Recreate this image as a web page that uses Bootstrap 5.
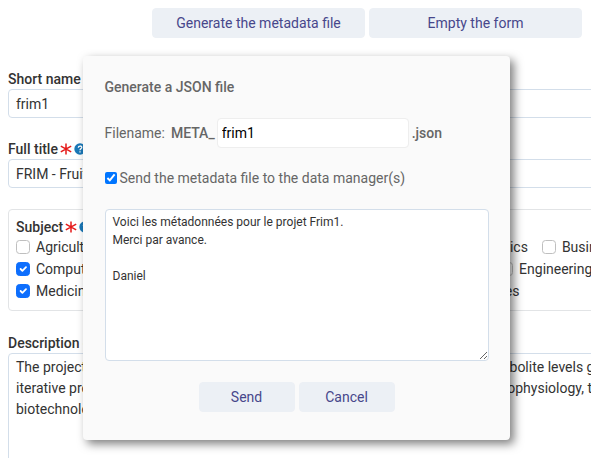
<!DOCTYPE html>
<html lang="en">
<head>
<meta charset="utf-8">
<meta name="viewport" content="width=device-width, initial-scale=1">
<title>Metadata form</title>
<link href="https://cdn.jsdelivr.net/npm/bootstrap@5.3.0/dist/css/bootstrap.min.css" rel="stylesheet">
<style>
  body { font-family: Roboto, "Liberation Sans", sans-serif; font-size: 14px; line-height: 20px; color: #333; background: #fff; height: 100vh; }
  .sheet { width: 150vw; min-width: 860px; padding: 8px; }
  .actions { padding-left: 144px; gap: 4px; margin-bottom: 31px; }
  .btn-soft { --bs-btn-bg: #ecf0f5; --bs-btn-color: #47478b; --bs-btn-hover-bg: #dfe5ee; --bs-btn-hover-color: #47478b; font-size: 14px; line-height: 20px; padding: 4px 12px; border-radius: 4px; border: 1px solid #ecf0f5; height: 30px; }
  .btn-wide { width: 213px; }
  .btn-short { width: 96px; }
  .field-title { font-weight: 500; line-height: 20px; gap: 2px; }
  .field-block { margin-bottom: 21px; }
  .form-control { font-size: 14px; line-height: 20px; color: #333; border: 1px solid #d3deea; border-radius: 4px; padding: 4px 7px; }
  .field-block .form-control { height: 29px; }
  .subjects { border: 1px solid #e2e4e6; border-radius: 4px; padding: 7px; margin-bottom: 22px; }
  .choice-row { gap: 7px; height: 22px; }
  .choice-row .form-check { min-height: 20px; padding-left: 20px; margin: 0; white-space: nowrap; }
  .choice-row .form-check.set-apart { margin-left: 7px; }
  .choice-row .form-check-input { width: 14px; height: 14px; margin: 3px 0 0 -20px; border-color: #bfbfbf; }
  .choice-row .form-check-input:checked { border-color: #0d6efd; }
  .long-text { line-height: 21px; height: 140px; padding-top: 3px; resize: none; overflow: hidden; }
  .overlay { left: 0; right: 0; top: 56px; padding-left: 1px; }
  .dialog-box { width: 427px; background: #fafafa; border-radius: 4px; color: #666; padding: 21px 21px 20px 22px; box-shadow: 4px 4px 10px rgba(0,0,0,.5); }
  .dialog-box h2 { font-size: 14px; line-height: 20px; font-weight: 500; margin: 0 0 21px; }
  .name-row { margin-bottom: 20px; }
  .name-row b { font-weight: 500; }
  .name-row label { margin-right: 6px; }
  .name-row .form-control { width: 192px; color: #000; border-color: #eee; padding: 4px; margin: 0 3px 0 2px; }
  .native-check { width: 12px; height: 12px; margin: 0 3px 0 0; accent-color: #0075ff; }
  .message { font-size: 12px; line-height: 18px; height: 152px; margin: 21px 0; padding: 3px 7px; resize: both; }
</style>
<script src="https://cdn.jsdelivr.net/npm/bootstrap@5.3.0/dist/js/bootstrap.bundle.min.js"></script>
</head>
<body class="position-relative overflow-hidden">
<svg class="d-none">
  <symbol id="star" viewBox="0 0 12 12"><path d="M6 .5v11M.8 3.200l10.400 5.600M11.200 3.200L.8 8.800" stroke="#e51a1a" stroke-width="1.500" fill="none"/></symbol>
  <symbol id="help" viewBox="0 0 12 12"><circle cx="6" cy="6" r="5.700" fill="#1a78b8"/><path d="M4.300 4.700c0-2.200 3.500-2.200 3.500-.2C7.800 5.700 6 5.600 6 7.200M6 8.200v1.300" stroke="#fff" stroke-width="1.300" fill="none"/></symbol>
</svg>
<main class="sheet">
  <div class="actions d-flex">
    <button type="button" class="btn btn-soft btn-wide">Generate the metadata file</button>
    <button type="button" class="btn btn-soft btn-wide">Empty the form</button>
  </div>
  <form>
    <div class="field-block">
      <label class="field-title d-flex align-items-center" for="short">Short name <svg width="12" height="12"><use href="#star"/></svg></label>
      <input class="form-control" id="short" value="frim1">
    </div>
    <div class="field-block">
      <label class="field-title d-flex align-items-center" for="full">Full title <svg width="12" height="12"><use href="#star"/></svg><svg width="12" height="12"><use href="#help"/></svg></label>
      <input class="form-control" id="full" value="FRIM - Fruit Integrative Modelling">
    </div>
    <div class="subjects" role="group" aria-labelledby="subject">
      <div class="field-title d-flex align-items-center" id="subject">Subject <svg width="12" height="12"><use href="#star"/></svg><svg width="12" height="12"><use href="#help"/></svg></div>
      <div class="choice-row d-flex">
        <div class="form-check"><input class="form-check-input" type="checkbox" id="s1"><label for="s1">Agricultural Sciences</label></div>
        <div class="form-check"><input class="form-check-input" type="checkbox" id="s2"><label for="s2">Arts and Humanities</label></div>
        <div class="form-check"><input class="form-check-input" type="checkbox" id="s3"><label for="s3">Astronomy and Astrophysics</label></div>
        <div class="form-check set-apart"><input class="form-check-input" type="checkbox" id="s4"><label for="s4">Business and Management</label></div>
      </div>
      <div class="choice-row d-flex">
        <div class="form-check"><input class="form-check-input" type="checkbox" id="s5" checked><label for="s5">Computer and Information Science</label></div>
        <div class="form-check"><input class="form-check-input" type="checkbox" id="s6"><label for="s6">Earth and Environmental Sciences</label></div>
        <div class="form-check"><input class="form-check-input" type="checkbox" id="s7"><label for="s7">Engineering</label></div>
      </div>
      <div class="choice-row d-flex">
        <div class="form-check"><input class="form-check-input" type="checkbox" id="s8" checked><label for="s8">Medicine, Health and Life Sciences</label></div>
        <div class="form-check"><input class="form-check-input" type="checkbox" id="s9"><label for="s9">Law</label></div>
        <div class="form-check set-apart"><input class="form-check-input" type="checkbox" id="s10"><label for="s10">Physics</label></div>
        <div class="form-check set-apart"><input class="form-check-input" type="checkbox" id="s11"><label for="s11">Social Sciences</label></div>
      </div>
    </div>
    <label class="field-title d-block" for="about">Description of the dataset</label>
    <textarea class="form-control long-text" id="about" wrap="off">The project aims to build virtual tomato fruits that enable the prediction of metabolite levels given genetic and environmental inputs, by an
iterative process between institutes which combine expertise in fruit biology, ecophysiology, theoretical biology, biochemistry, and
biotechnology.</textarea>
  </form>
</main>
<div class="overlay position-absolute d-flex justify-content-center">
  <form class="dialog-box" role="dialog" aria-labelledby="dialog-title">
    <h2 id="dialog-title">Generate a JSON file</h2>
    <div class="name-row d-flex align-items-center">
      <label for="file">Filename:</label><b>META_</b>
      <input class="form-control" id="file" value="frim1"><b>.json</b>
    </div>
    <div class="d-flex align-items-center"><input type="checkbox" class="native-check" id="notify" checked><label for="notify">Send the metadata file to the data manager(s)</label></div>
    <textarea class="form-control message" aria-label="Message">Voici les métadonnées pour le projet Frim1.
Merci par avance.

Daniel</textarea>
    <div class="d-flex justify-content-center gap-1 pb-2">
      <button type="button" class="btn btn-soft btn-short">Send</button>
      <button type="button" class="btn btn-soft btn-short">Cancel</button>
    </div>
  </form>
</div>
</body>
</html>
